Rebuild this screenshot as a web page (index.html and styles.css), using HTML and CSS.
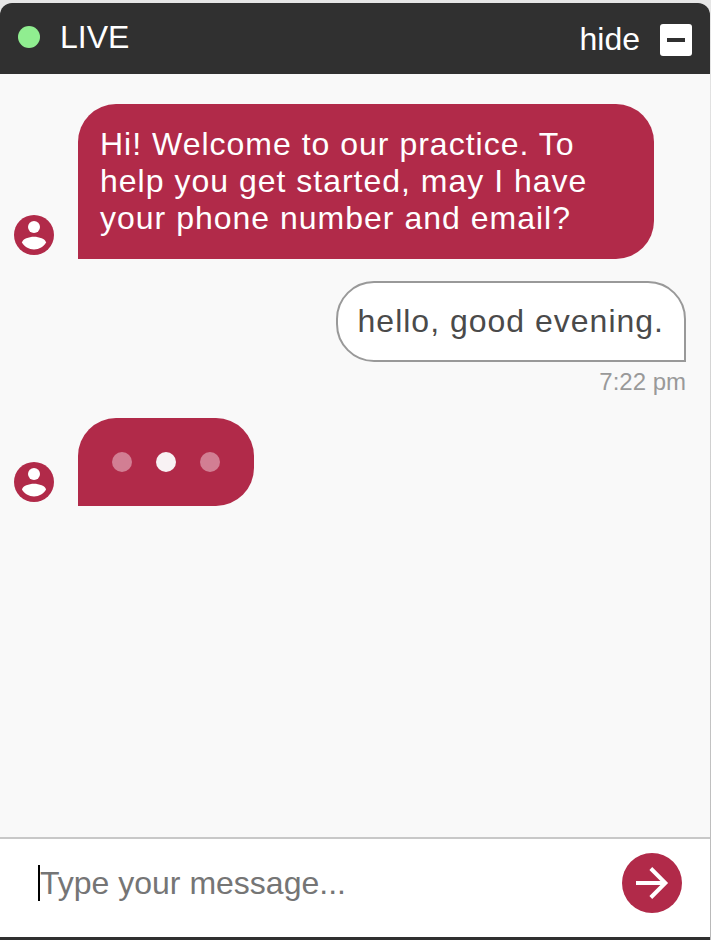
FILE: index.html
```html
<!DOCTYPE html>
<html lang="en">
<head>
<meta charset="utf-8">
<meta name="viewport" content="width=device-width, initial-scale=1">
<title>Live chat</title>
<link rel="stylesheet" href="styles.css">
</head>
<body>
<svg class="symbols" aria-hidden="true">
  <symbol id="person" viewBox="0 0 40 40">
    <circle cx="20" cy="20" r="20" fill="#b12a49"/>
    <circle cx="20" cy="12" r="6" fill="#fff"/>
    <path d="M8 27.500C8.500 24 15 21.800 20 21.800S31.500 24 32 27.500C30 31.600 25 34.400 20 34.400S10 31.600 8 27.500z" fill="#fff"/>
  </symbol>
</svg>
<main class="chat">
  <header class="chat-header">
    <div class="status"><span class="status-dot"></span>LIVE</div>
    <button class="hide-button" type="button">hide
      <svg class="hide-icon" viewBox="0 0 32 32" aria-hidden="true">
        <rect width="32" height="32" rx="3" fill="#fff"/>
        <rect x="7" y="14" width="18" height="4" fill="#303030"/>
      </svg>
    </button>
  </header>
  <section class="messages">
    <div class="row">
      <svg class="avatar" aria-hidden="true"><use href="#person"/></svg>
      <p class="bubble bubble-agent">Hi! Welcome to our practice. To help you get started, may I have your phone number and email?</p>
    </div>
    <div class="reply">
      <p class="bubble bubble-visitor">hello, good evening.</p>
      <time class="time">7:22 pm</time>
    </div>
    <div class="row">
      <svg class="avatar" aria-hidden="true"><use href="#person"/></svg>
      <div class="bubble bubble-agent typing">
        <span class="dot"></span><span class="dot dot-active"></span><span class="dot"></span>
      </div>
    </div>
  </section>
  <form class="composer">
    <input class="message-input" type="text" placeholder="Type your message..." aria-label="Type your message">
    <button class="send-button" type="button" aria-label="Send">
      <svg class="send-icon" viewBox="0 0 60 60" aria-hidden="true">
        <path d="M14 30H43M28.800 15.500L43.300 30L28.800 44.500" fill="none" stroke="#fff" stroke-width="4"/>
      </svg>
    </button>
  </form>
</main>
</body>
</html>
```
FILE: styles.css
```css
* {
  box-sizing: border-box;
}

body {
  margin: 0;
  min-height: 100vh;
  display: flex;
  padding: 3px 1px 0 0;
  background: linear-gradient(#e6e6e6, #b8b8b8);
  font-family: "Liberation Sans", Arial, sans-serif;
  font-size: 32px;
  line-height: 37px;
}

.symbols {
  display: none;
}

.chat {
  flex: 1;
  min-width: 0;
  display: flex;
  flex-direction: column;
  border-bottom: 3px solid #303030;
  border-radius: 12px 12px 0 0;
  background: #f9f9f9;
  overflow: hidden;
}

.chat-header {
  display: flex;
  justify-content: space-between;
  align-items: center;
  padding: 15px 18px 16px;
  background: #303030;
  color: #fff;
}

.status {
  display: flex;
  align-items: center;
  gap: 20px;
  padding-bottom: 2px;
}

.status-dot {
  width: 22px;
  height: 22px;
  border-radius: 50%;
  background: #90ee90;
}

.hide-button {
  display: flex;
  align-items: center;
  gap: 20px;
  padding: 3px 0 0;
  border: 0;
  background: none;
  color: inherit;
  font: inherit;
}

.hide-icon {
  width: 32px;
  height: 32px;
}

.messages {
  flex: 1;
  display: flex;
  flex-direction: column;
  gap: 22px;
  padding: 30px 24px 30px 14px;
}

.row {
  display: flex;
  align-items: flex-end;
  gap: 24px;
}

.avatar {
  flex: none;
  width: 40px;
  height: 40px;
  margin-bottom: 4px;
}

.bubble {
  margin: 0;
  max-width: 576px;
  letter-spacing: 1px;
}

.bubble-agent {
  padding: 22px;
  border-radius: 38px 38px 38px 0;
  background: #b12a49;
  color: #fff;
}

.reply {
  display: flex;
  flex-direction: column;
  align-items: flex-end;
  gap: 6px;
}

.bubble-visitor {
  padding: 20px;
  border: 2px solid #999;
  border-radius: 38px 38px 0 38px;
  background: #fff;
  color: #4a4a4a;
}

.time {
  color: #999;
  font-size: 24px;
  line-height: 28px;
}

.typing {
  display: flex;
  gap: 24px;
  padding: 34px;
}

.dot {
  width: 20px;
  height: 20px;
  border-radius: 50%;
  background: #d27e93;
}

.dot-active {
  background: #f8f2f4;
}

.composer {
  display: flex;
  align-items: center;
  gap: 20px;
  padding: 14px 28px 24px 38px;
  border-top: 2px solid #c8c8c8;
  background: #fff;
}

.message-input {
  flex: 1;
  min-width: 0;
  height: 36px;
  padding: 0;
  border: 0;
  border-left: 2px solid #000;
  outline: 0;
  background: none;
  color: #303030;
  font: inherit;
}

.message-input::placeholder {
  color: #757575;
}

.send-button {
  flex: none;
  width: 60px;
  height: 60px;
  padding: 0;
  border: 0;
  border-radius: 50%;
  background: #b12a49;
}

.send-icon {
  display: block;
}
```
